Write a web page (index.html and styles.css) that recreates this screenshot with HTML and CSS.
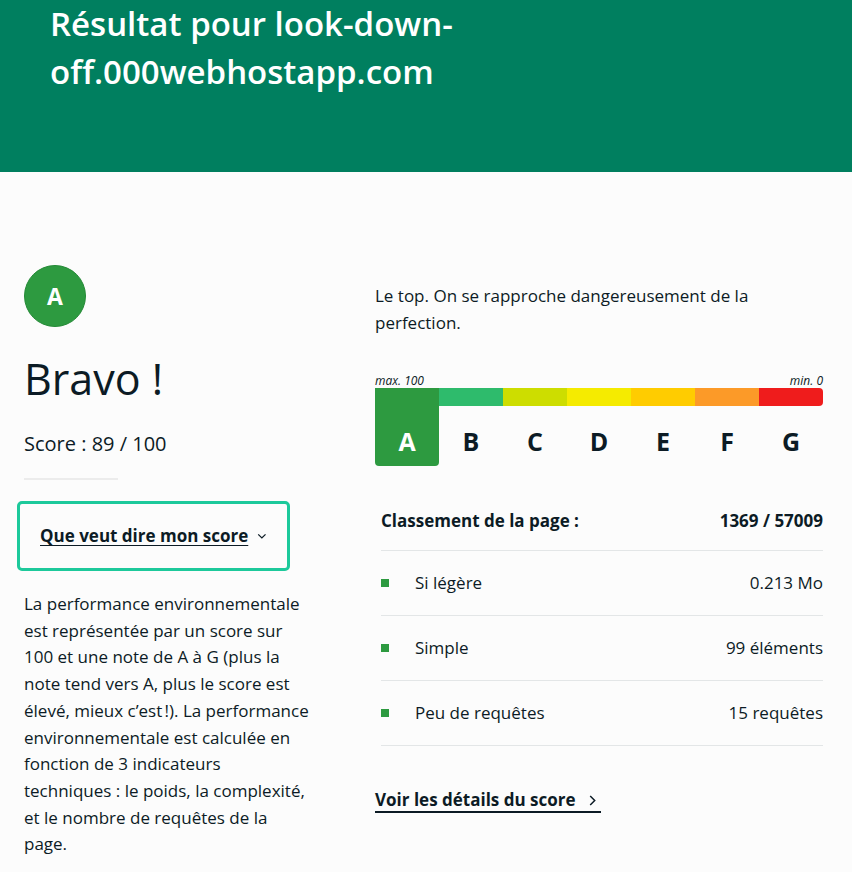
FILE: index.html
```html
<!DOCTYPE html>
<html lang="fr">
<head>
<meta charset="utf-8">
<title>Résultat</title>
<link rel="stylesheet" href="styles.css">
</head>
<body>
<header class="hero">
  <h1 class="hero-title">Résultat pour look-down-off.000webhostapp.com</h1>
</header>
<main class="result">
  <section class="summary">
    <div class="grade-badge">A</div>
    <h2 class="bravo">Bravo !</h2>
    <p class="score">Score : 89 / 100</p>
    <hr class="divider">
    <button class="toggle" type="button">
      <span class="toggle-label">Que veut dire mon score</span>
      <svg class="toggle-icon" width="12" height="8" viewBox="0 0 12 8" aria-hidden="true"><path d="M1.5 2 L6 6.3 L10.5 2" fill="none" stroke="currentColor" stroke-width="1.6"/></svg>
    </button>
    <p class="explain">La performance environnementale est représentée par un score sur 100 et une note de A à G (plus la note tend vers A, plus le score est élevé, mieux c’est&#8239;!). La perfor&shy;mance environnementale est calcu&shy;lée en fonction de 3 indicateurs techniques : le poids, la complexité, et le nombre de requêtes de la page.</p>
  </section>
  <section class="details">
    <p class="verdict">Le top. On se rapproche dangereusement de la perfection.</p>
    <div class="scale">
      <div class="scale-legend"><span>max. 100</span><span>min. 0</span></div>
      <div class="scale-bar">
        <div class="grade grade-a is-current"><span class="strip"></span><span class="letter">A</span></div>
        <div class="grade grade-b"><span class="strip"></span><span class="letter">B</span></div>
        <div class="grade grade-c"><span class="strip"></span><span class="letter">C</span></div>
        <div class="grade grade-d"><span class="strip"></span><span class="letter">D</span></div>
        <div class="grade grade-e"><span class="strip"></span><span class="letter">E</span></div>
        <div class="grade grade-f"><span class="strip"></span><span class="letter">F</span></div>
        <div class="grade grade-g"><span class="strip"></span><span class="letter">G</span></div>
      </div>
    </div>
    <div class="metrics">
      <div class="metric metric-head"><span>Classement de la page :</span><span>1369 / 57009</span></div>
      <div class="metric"><span class="metric-label"><i class="dot"></i>Si légère</span><span>0.213 Mo</span></div>
      <div class="metric"><span class="metric-label"><i class="dot"></i>Simple</span><span>99 éléments</span></div>
      <div class="metric"><span class="metric-label"><i class="dot"></i>Peu de requêtes</span><span>15 requêtes</span></div>
    </div>
    <a class="details-link" href="#">Voir les détails du score
      <svg class="link-icon" width="7" height="11" viewBox="0 0 7 11" aria-hidden="true"><path d="M1.2 1 L5.7 5.5 L1.2 10" fill="none" stroke="currentColor" stroke-width="1.5"/></svg>
    </a>
  </section>
</main>
</body>
</html>
```

FILE: styles.css
```css
* { box-sizing: border-box; }

body {
  margin: 0;
  background: #fcfcfc;
  color: #0c1b25;
  font-family: "Open Sans", "Noto Sans", sans-serif;
  font-size: 17px;
}

.hero {
  background: #007f5f;
  height: 172px;
  padding: 0 50px;
}

.hero-title {
  margin: 0;
  max-width: 500px;
  color: #fff;
  font-size: 33px;
  font-weight: 600;
  line-height: 48px;
}

.result {
  display: grid;
  grid-template-columns: 290px 448px;
  column-gap: 61px;
  padding: 93px 24px 40px;
}

.summary {
  display: flex;
  flex-direction: column;
  align-items: flex-start;
}

.grade-badge {
  width: 62px;
  height: 62px;
  border-radius: 50%;
  background: #2d9a40;
  border: 1px solid #258a37;
  color: #fff;
  font-size: 23px;
  font-weight: 700;
  display: flex;
  align-items: center;
  justify-content: center;
}

.bravo {
  margin: 25px 0 0;
  font-size: 43px;
  font-weight: 400;
  line-height: 54px;
}

.score {
  margin: 25px 0 0;
  font-size: 20px;
  line-height: 26px;
}

.divider {
  margin: 21px 0 0;
  width: 94px;
  height: 2px;
  border: 0;
  background: #ececec;
}

.toggle {
  margin: 21px 0 0 -7px;
  width: 273px;
  height: 70px;
  padding: 0 20px;
  border: 3px solid #1dc99b;
  border-radius: 5px;
  background: transparent;
  color: #0c1b25;
  font-family: inherit;
  font-size: 17px;
  font-weight: 700;
  line-height: 24px;
  white-space: nowrap;
  display: flex;
  align-items: center;
  justify-content: flex-start;
  gap: 9px;
  cursor: pointer;
}

.toggle-label {
  text-decoration: underline;
  text-underline-offset: 3px;
}

.explain {
  margin: 20px 0 0;
  width: 288px;
  line-height: 26.7px;
  hyphens: manual;
}

.verdict {
  margin: 17px 0 0;
  line-height: 27px;
}

.scale {
  margin-top: 38px;
}

.scale-legend {
  display: flex;
  justify-content: space-between;
  font-size: 12px;
  font-style: italic;
  line-height: 14px;
}

.scale-bar {
  display: flex;
  height: 78px;
}

.grade {
  flex: 1;
  display: flex;
  flex-direction: column;
  align-items: center;
}

.strip {
  display: block;
  width: 100%;
  height: 18px;
}

.letter {
  padding-top: 20px;
  font-size: 25px;
  font-weight: 700;
  line-height: 30px;
}

.grade-a { background: #2d9a40; border-radius: 4px; }
.grade-a .strip { background: #2d9a40; }
.grade-a .letter { color: #fff; }
.grade-b .strip { background: #2ebb6c; }
.grade-c .strip { background: #cddd00; }
.grade-d .strip { background: #f5eb00; }
.grade-e .strip { background: #ffcc00; }
.grade-f .strip { background: #fc9a28; }
.grade-g .strip { background: #ef1c1c; border-radius: 0 4px 4px 0; }

.metrics {
  margin: 23px 0 0 6px;
}

.metric {
  display: flex;
  justify-content: space-between;
  align-items: center;
  padding: 20px 0;
  line-height: 24px;
  border-bottom: 1px solid #e3e6e7;
}

.metric-head {
  padding-bottom: 17px;
  font-weight: 700;
}

.metric-label {
  display: flex;
  align-items: center;
}

.dot {
  width: 8px;
  height: 8px;
  background: #2d9a40;
  margin-right: 26px;
}

.details-link {
  margin-top: 43px;
  display: inline-flex;
  align-items: center;
  color: #0c1b25;
  font-weight: 700;
  line-height: 22px;
  text-decoration: none;
  border-bottom: 2px solid #0c1b25;
}

.link-icon {
  margin: 0 5px 0 13px;
}
```
